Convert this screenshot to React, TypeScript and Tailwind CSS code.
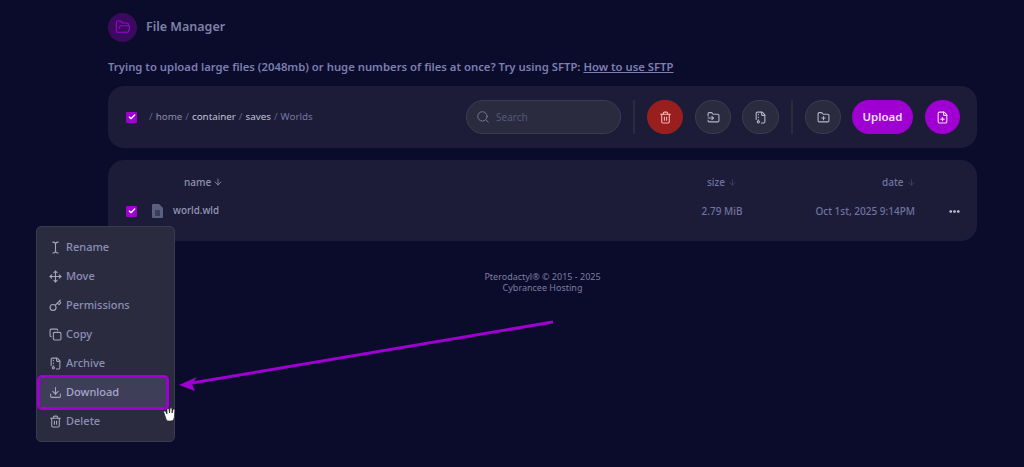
import React from "react";
import { ArrowDown, Search, Trash2, FolderInput, FileArchive, FolderPlus, FilePlus, FolderOpen, TextCursor, Move, Key, Copy, Download, Ellipsis, Check } from "lucide-react";

function Box() {
  return (
    <span className="flex h-[11px] w-[11px] items-center justify-center rounded-[1px] bg-[#9f00d1]">
      <Check size={8} strokeWidth={4} className="text-white" />
    </span>
  );
}

function Round({ children, className = "" }: { children: React.ReactNode; className?: string }) {
  return (
    <span className={`flex h-[34px] w-[36px] items-center justify-center rounded-full border border-[#3b3c4e] bg-[#2a2b3e] text-[#b4b6c8] ${className}`}>
      {children}
    </span>
  );
}

const items: [string, React.ReactNode][] = [
  ["Rename", <TextCursor size={13} />],
  ["Move", <Move size={13} />],
  ["Permissions", <Key size={13} />],
  ["Copy", <Copy size={13} />],
  ["Archive", <FileArchive size={13} />],
  ["Download", <Download size={13} />],
  ["Delete", <Trash2 size={13} />],
];

export default function App() {
  return (
    <div className="relative h-[467px] w-full overflow-hidden bg-[#0b0b2b] font-['Noto_Sans',sans-serif]">
      <div className="ml-[108px] flex w-[869px] flex-col pt-[12px]">
        <div className="flex h-[30px] items-center gap-[9px]">
          <span className="flex h-[29px] w-[29px] items-center justify-center rounded-full bg-[#3b0a5e]">
            <FolderOpen size={16} strokeWidth={1.6} className="text-[#a100d8]" />
          </span>
          <span className="text-[12.5px] font-semibold text-[#7f82a8]">File Manager</span>
        </div>
        <p className="mt-[18px] h-[14px] text-[11.3px] leading-[14px] font-semibold text-[#7c7fb0]">
          Trying to upload large files (2048mb) or huge numbers of files at once? Try using SFTP:{" "}
          <span className="underline">How to use SFTP</span>
        </p>
        <div className="mt-[12px] flex h-[62px] items-center rounded-[16px] bg-[#1c1c38] pr-[17px] pl-[18px]">
          <Box />
          <div className="ml-[12px] flex items-center gap-[3px] text-[9.8px] text-[#5f6184]">
            <span>/</span><span className="text-[#8a8cab]">home</span>
            <span>/</span><span className="text-[#c0c2d6]">container</span>
            <span>/</span><span className="text-[#c0c2d6]">saves</span>
            <span>/</span><span className="text-[#7477a6]">Worlds</span>
          </div>
          <div className="ml-auto flex items-center">
            <div className="flex h-[34px] w-[155px] items-center gap-[6px] rounded-full border border-[#3b3c4e] bg-[#2a2b3e] pl-[9px] text-[#7a7c96]">
              <Search size={14} strokeWidth={1.6} />
              <span className="text-[10px] text-[#55577a]">Search</span>
            </div>
            <span className="mx-[12px] h-[34px] w-[2px] bg-[#2a2b3e]" />
            <Round className="border-[#991f1f] bg-[#991f1f] text-[#f4b4b4]"><Trash2 size={13} /></Round>
            <Round className="ml-[12px]"><FolderInput size={13} /></Round>
            <Round className="ml-[11px] w-[37px]"><FileArchive size={13} /></Round>
            <span className="mx-[12px] h-[34px] w-[2px] bg-[#2a2b3e]" />
            <Round><FolderPlus size={13} /></Round>
            <span className="ml-[11px] flex h-[34px] w-[61px] items-center justify-center rounded-full bg-[#9f00d1] text-[11.5px] font-semibold text-[#efe0f7]">Upload</span>
            <span className="ml-[12px] flex h-[34px] w-[35px] items-center justify-center rounded-full bg-[#9f00d1] text-[#efe0f7]"><FilePlus size={13} /></span>
          </div>
        </div>
        <div className="mt-[12px] flex h-[81px] flex-col rounded-[16px] bg-[#1c1c38] pt-[14px] pr-[16px] pl-[18px]">
          <div className="flex h-[16px] items-center text-[10px] font-medium">
            <span className="ml-[58px] flex w-[40px] items-center gap-[2px] text-[#8f91ad]">name <ArrowDown size={10} /></span>
            <span className="ml-[483px] flex items-center gap-[3px] text-[#7173a0]">size <ArrowDown size={9} className="text-[#45476a]" /></span>
            <span className="ml-[145px] flex items-center gap-[3px] text-[#7173a0]">date <ArrowDown size={9} className="text-[#45476a]" /></span>
          </div>
          <div className="mt-[13px] flex h-[16px] items-center text-[10px] font-medium">
            <Box />
            <svg width="11" height="14" viewBox="0 0 11 14" className="ml-[15px]">
              <path d="M1 0 H7 L11 4 V13 a1 1 0 0 1 -1 1 H1 a1 1 0 0 1 -1 -1 V1 a1 1 0 0 1 1 -1 Z" fill="#5c5e80" />
              <path d="M3 7 H8 M3 9 H8 M3 11 H8" stroke="#1c1c38" strokeWidth="1" />
            </svg>
            <span className="ml-[10px] text-[9.8px] text-[#9698b6]">world.wld</span>
            <span className="ml-auto text-[#7173a0]">2.79 MiB</span>
            <span className="ml-[73px] text-[#7173a0]">Oct 1st, 2025 9:14PM</span>
            <Ellipsis size={13} strokeWidth={3} className="ml-[33px] text-[#d6d7e4]" />
          </div>
        </div>
        <div className="mt-[30px] text-center text-[9px] leading-[11px] text-[#7c7ea0]">
          <p>Pterodactyl® © 2015 - 2025</p>
          <p>Cybrancee Hosting</p>
        </div>
      </div>

      <div className="absolute top-[226px] left-[36px] flex h-[216px] w-[139px] flex-col rounded-[5px] border border-[#3a3b4d] bg-[#2a2b3e] px-[3px] py-[6px]">
        {items.map(([label, icon]) => {
          const on = label === "Download";
          return (
            <div key={label} className={`flex h-[29px] shrink-0 items-center gap-[4px] pl-[9px] text-[11px] font-medium text-[#8d8fb8] ${on ? "w-[126px] rounded-[2px] bg-[#3e3e58] text-[#a5a7cc] outline-[3px] outline-[#9f00d1]" : ""}`}>
              <span className="flex h-[13px] w-[13px] items-center justify-center text-[#a5a7b8]">{icon}</span>
              {label}
            </div>
          );
        })}
      </div>

      <svg className="absolute top-0 left-0" width="1024" height="467" viewBox="0 0 1024 467" fill="none">
        <path d="M553 322 L192 383" stroke="#9f00d1" strokeWidth="3" />
        <path d="M179 385 L197 377 L192 384 L195 391 Z" fill="#9f00d1" />
        <path d="M166 419 L164 413 C163 411 165 410 166 412 L167 414 L167 409.500 C167 408 169 408 169 409.500 L169.500 413 L170 408.800 C170 407.300 172 407.300 172 408.800 L172 413 L172.800 410 C173 408.500 175 408.800 174.800 410.300 L174.500 416 C174.400 419 173 421 171 421 L168 421 C167 421 166.500 420 166 419 Z" fill="#fff" stroke="#222" strokeWidth="0.7" />
      </svg>
    </div>
  );
}
